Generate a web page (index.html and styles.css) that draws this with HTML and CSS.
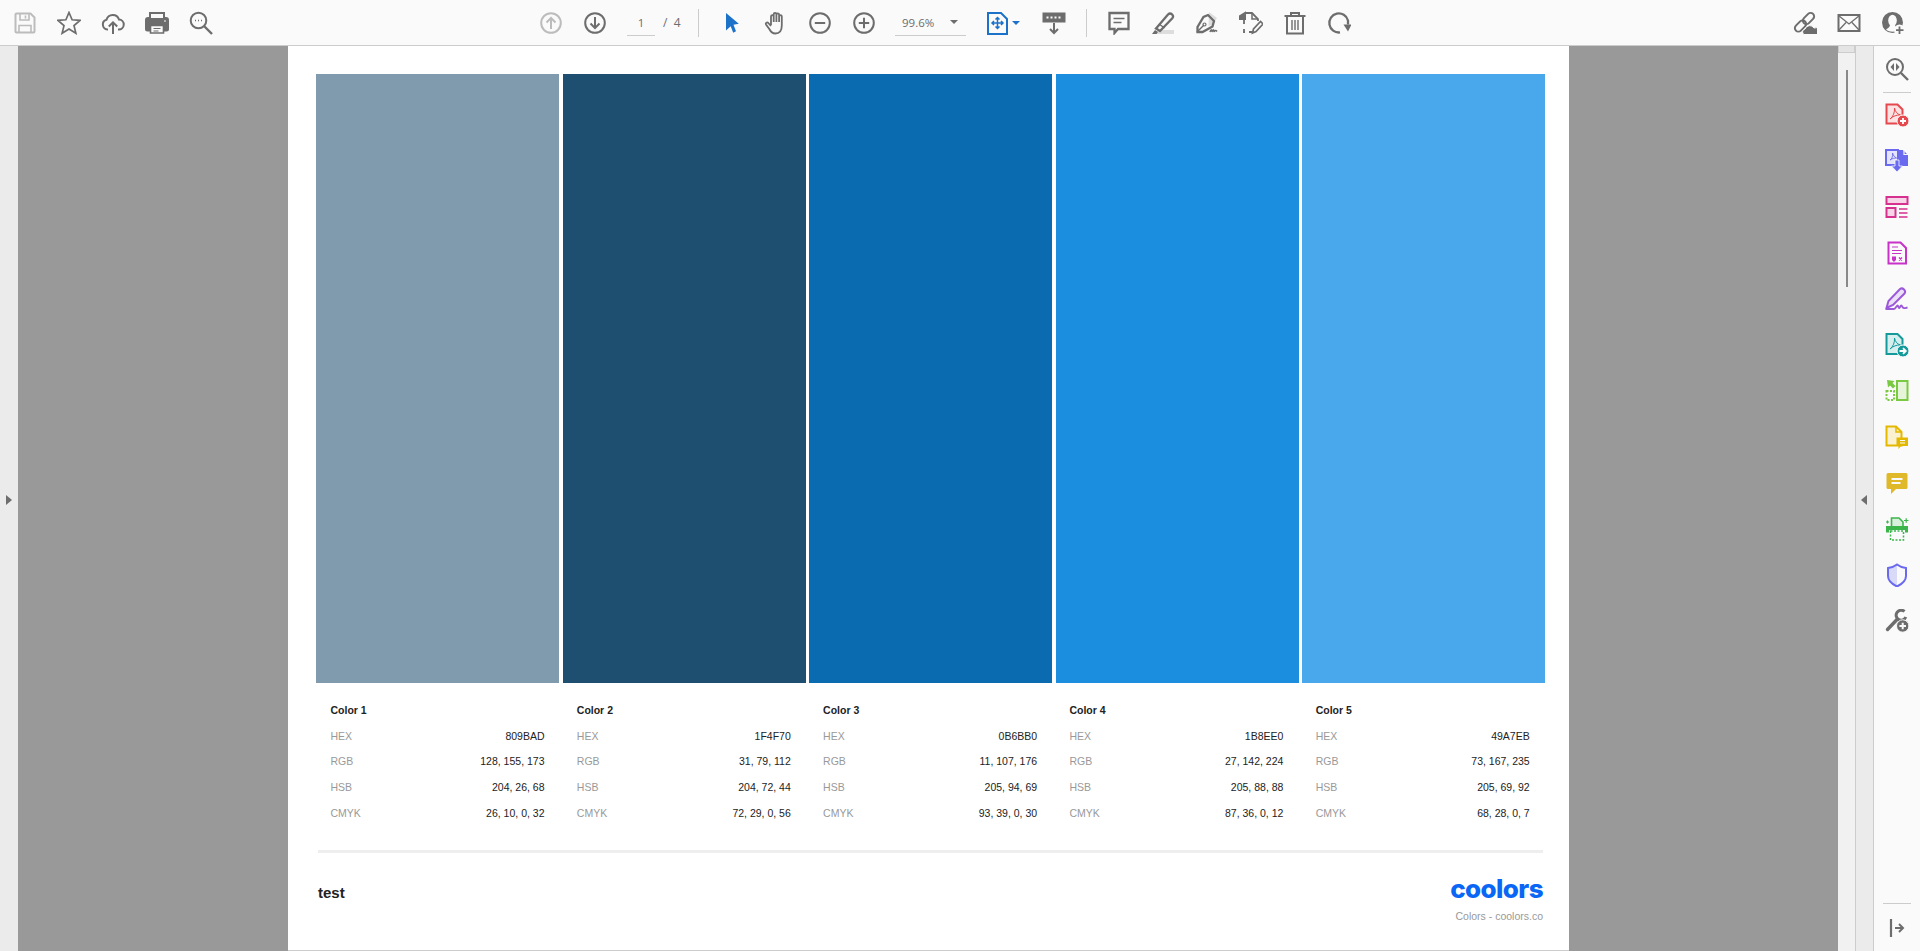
FILE: index.html
```html
<!DOCTYPE html>
<html lang="en">
  <head>
    <meta charset="UTF-8" />
    <title>Coolors palette - PDF viewer</title>
    <link rel="stylesheet" href="styles.css">
  </head>
  <body>
    <header class="toolbar">
      <div class="tool off"><svg viewBox="0 0 24 24"><path d="M2.500 3.500q0-1 1-1h14l4 4v14q0 1-1 1h-17q-1 0-1-1z"/><path d="M7 3v6h9V3M12.500 4.500v3M6 21v-6.500h12V21" stroke-width="1.600"/></svg></div>
      <div class="tool"><svg viewBox="0 0 24 24"><path d="M12 1.500l3.100 7.300 7.900.6-6 5.200 1.900 7.700-6.900-4.200-6.900 4.200 1.900-7.700-6-5.200 7.900-.6z" stroke-width="1.700"/></svg></div>
      <div class="tool"><svg viewBox="0 0 24 24"><path d="M7 18.500H6.500a5 5 0 0 1-1-9.800 6.500 6.500 0 0 1 12.500-.2 5 5 0 0 1-.5 10H17"/><path d="M12 23V11.500M7.800 15.500l4.200-4.200 4.200 4.200"/></svg></div>
      <div class="tool"><svg viewBox="0 0 24 24"><path class="solid" d="M3 7h18q2 0 2 2v9q0 1.500-1.500 1.500H2.500Q1 19.500 1 18V9q0-2 2-2z"/><path d="M5 7V2h14v5" fill="#fafafa"/><path d="M5.500 14.500h13v7.500h-13z" fill="#fafafa" stroke-width="1.600"/><path d="M8.500 17.500h7M8.500 20h5" stroke-width="1.200"/><path d="M19 10h2" stroke="#fafafa" stroke-width="1.200"/></svg></div>
      <div class="tool"><svg viewBox="0 0 24 24"><circle cx="9.500" cy="9.500" r="7.800"/><path d="M15 15l8 8" stroke-width="2.400"/><path d="M6 9.500h1M9 9.500h1M12 9.500h1" stroke-width="1.600"/></svg></div>

      <div class="tool off nav-start"><svg viewBox="0 0 24 24"><circle cx="12" cy="12" r="9.800"/><path d="M12 18V7M7.500 11.500L12 7l4.500 4.500"/></svg></div>
      <div class="tool"><svg viewBox="0 0 24 24"><circle cx="12" cy="12" r="9.800"/><path d="M12 6v11M7.500 12.500L12 17l4.500-4.500"/></svg></div>
      <div class="field page-field">1</div>
      <div class="page-total">/&nbsp;&nbsp;4</div>
      <div class="sep sep-a"></div>
      <div class="tool"><svg viewBox="0 0 24 24"><path class="blue-fill" d="M6 2l12.800 10.700-5.300 1.100 2.500 6.500-2.800 1.400-2.500-6.500L6 19.500z"/></svg></div>
      <div class="tool"><svg viewBox="0 0 24 24"><path d="M7 14V5.500a1.300 1.300 0 0 1 2.700 0V11M9.700 11V3.300a1.300 1.300 0 0 1 2.700 0V11M12.400 11V3.800a1.300 1.300 0 0 1 2.700 0V11M15.100 11V5.500a1.300 1.300 0 0 1 2.700 0v9c0 5-2.500 8-6.500 8-3 0-4.500-1.500-6-4.500L2 13.500c-.8-1.500 1-2.800 2.300-1.500L7 15" stroke-width="1.800"/></svg></div>
      <div class="tool"><svg viewBox="0 0 24 24"><circle cx="12" cy="12" r="9.800"/><path d="M6.800 12h10.400"/></svg></div>
      <div class="tool"><svg viewBox="0 0 24 24"><circle cx="12" cy="12" r="9.800"/><path d="M6.800 12h10.400M12 6.800v10.400"/></svg></div>
      <div class="field zoom-field"><span>99.6%</span><i class="caret"></i></div>
      <div class="fit-tool">
        <svg viewBox="0 0 24 24"><path class="blue-line" d="M2 2h13l6 6v15H2z"/><path class="blue-line" d="M11.500 6.500v11M9.500 8.500l2-2 2 2M9.500 15.500l2 2 2-2M6 12h11M8 10l-2 2 2 2M15 10l2 2-2 2" stroke-width="1.500"/></svg>
        <i class="caret blue"></i>
      </div>
      <div class="tool tool-tts"><svg viewBox="0 0 24 24"><path class="solid" d="M1.500 2.500h21v8h-21z"/><path d="M4.500 6.500h2M8.500 6.500h2M12.500 6.500h2M16.500 6.500h2" stroke="#fafafa" stroke-width="2.200"/><path d="M12 12v10M8 18l4 4 4-4"/></svg></div>
      <div class="sep sep-b"></div>
      <div class="tool"><svg viewBox="0 0 24 24"><path d="M2.500 2h19v16H11l-3.500 4v-4h-5z" stroke-width="2.300"/><path d="M6.500 7.500h11M6.500 11.500h8" stroke-width="1.500"/></svg></div>
      <div class="tool"><svg viewBox="0 0 24 24"><path d="M1 23h22v-4H8z" fill="#ddd" stroke="none"/><path class="solid" d="M1 23l3-4 3 2-1.500 2z" stroke="none"/><path d="M5 17.500L17 3.500q2-2 4-.2t.3 4L9 20z" stroke-width="2.300"/><path d="M8 13l5.500 4" stroke-width="1.500"/></svg></div>
      <div class="tool"><svg viewBox="0 0 24 24"><path d="M14 1l8 6-5 7-4 1 .5 0" fill="#ddd" stroke="none"/><path d="M13 4l6 6-1.500 5.500-10 5.500-5 0 0-5 6-10z" stroke-width="2.300"/><path d="M2 21l7-7" stroke-width="1.500"/><circle cx="9.500" cy="13.500" r="1.500" stroke-width="1.200"/><path d="M15 21c1-3 2-3 2 0 1-3 2-3 2 0 1-2 2-2 3-.5" stroke-width="1.500"/></svg></div>
      <div class="tool"><svg viewBox="0 0 24 24"><path class="solid" d="M1 5l5-3v6H1z"/><path d="M6 2h7l6 6v2M6 21H5v-3M5 13v-4M13 21h-3" stroke-width="1.800"/><path d="M13 2v6h6" stroke-width="1.500"/><path d="M13.500 22l1-4 7-7.500 2.500 2.500-7 7.500z" stroke-width="1.700"/></svg></div>
      <div class="tool"><svg viewBox="0 0 24 24"><path d="M1.500 5h21M8 5V2h8v3M4 5v17.500h16V5"/><path d="M9 9v10M12 9v10M15 9v10" stroke-width="1.400"/></svg></div>
      <div class="tool"><svg viewBox="0 0 24 24"><path d="M13 21.400A9.500 9.500 0 1 1 21 9.500v4" stroke-width="2.300"/><path class="solid" d="M16.500 13.500h8l-3.500 7z" stroke="none"/></svg></div>

      <div class="tool tool-share"><svg viewBox="0 0 24 24"><rect x="1" y="11.500" width="13" height="7" rx="3.500" transform="rotate(-45 7.500 15)"/><rect x="9" y="4" width="13" height="7" rx="3.500" transform="rotate(-45 15.500 7.500)"/><path class="solid" d="M11 23.500a3 3 0 0 1 1-5.500 5 5 0 0 1 9-1 3.500 3.500 0 0 1 3 6.500z" stroke="#fafafa" stroke-width="1"/></svg></div>
      <div class="tool"><svg viewBox="0 0 24 24"><path d="M1.500 4h21v16h-21z"/><path d="M1.500 4.500L12 13 22.500 4.500M1.500 19.500l7.500-8M22.500 19.500l-7.500-8" stroke-width="1.300"/></svg></div>
      <div class="tool"><svg viewBox="0 0 24 24"><circle class="solid" cx="11.500" cy="11.500" r="10.500" stroke="none"/><ellipse cx="11.500" cy="9.500" rx="4.300" ry="5.800" fill="#fafafa" stroke="none"/><path d="M9 14c0 2-2 3-4 4.500 3 3 10 3 13 0-2-1.500-4-2.500-4-4.500z" fill="#fafafa" stroke="none"/><circle cx="18.500" cy="19" r="5.500" fill="#fafafa" stroke="none"/><path d="M18.500 15.500v7.500M15 19.200h7.500" stroke-width="1.800"/></svg></div>
    </header>

    <main class="workspace">
      <aside class="side-left"><i class="arrow-right"></i></aside>

      <div class="viewer">
        <article class="page">
          <div class="swatches">
            <div class="swatch c1"></div>
            <div class="swatch c2"></div>
            <div class="swatch c3"></div>
            <div class="swatch c4"></div>
            <div class="swatch c5"></div>
          </div>

          <div class="details">
            <section>
              <h3>Color 1</h3>
              <div class="row"><span>HEX</span><b>809BAD</b></div>
              <div class="row"><span>RGB</span><b>128, 155, 173</b></div>
              <div class="row"><span>HSB</span><b>204, 26, 68</b></div>
              <div class="row"><span>CMYK</span><b>26, 10, 0, 32</b></div>
            </section>
            <section>
              <h3>Color 2</h3>
              <div class="row"><span>HEX</span><b>1F4F70</b></div>
              <div class="row"><span>RGB</span><b>31, 79, 112</b></div>
              <div class="row"><span>HSB</span><b>204, 72, 44</b></div>
              <div class="row"><span>CMYK</span><b>72, 29, 0, 56</b></div>
            </section>
            <section>
              <h3>Color 3</h3>
              <div class="row"><span>HEX</span><b>0B6BB0</b></div>
              <div class="row"><span>RGB</span><b>11, 107, 176</b></div>
              <div class="row"><span>HSB</span><b>205, 94, 69</b></div>
              <div class="row"><span>CMYK</span><b>93, 39, 0, 30</b></div>
            </section>
            <section>
              <h3>Color 4</h3>
              <div class="row"><span>HEX</span><b>1B8EE0</b></div>
              <div class="row"><span>RGB</span><b>27, 142, 224</b></div>
              <div class="row"><span>HSB</span><b>205, 88, 88</b></div>
              <div class="row"><span>CMYK</span><b>87, 36, 0, 12</b></div>
            </section>
            <section>
              <h3>Color 5</h3>
              <div class="row"><span>HEX</span><b>49A7EB</b></div>
              <div class="row"><span>RGB</span><b>73, 167, 235</b></div>
              <div class="row"><span>HSB</span><b>205, 69, 92</b></div>
              <div class="row"><span>CMYK</span><b>68, 28, 0, 7</b></div>
            </section>
          </div>

          <footer class="page-footer">
            <div class="palette-name">test</div>
            <div class="brand">
              <div class="logo">coolors</div>
              <div class="tagline">Colors - coolors.co</div>
            </div>
          </footer>
        </article>
      </div>

      <div class="scrollbar"><div class="scroll-btn"></div><div class="scroll-thumb"></div></div>
      <aside class="side-right"><i class="arrow-left"></i></aside>

      <nav class="tools">
        <div class="rail-top">
          <div class="rail-tool gray"><svg viewBox="0 0 24 24"><circle cx="10" cy="10" r="8"/><path d="M16 16l7 7" stroke-width="2.400"/><path class="solid" d="M9 6v8L5.500 10zM11 6v8l3.500-4z" stroke="none"/></svg></div>
          <div class="rail-line"></div>
          <div class="rail-tool red"><svg viewBox="0 0 24 24"><path class="tint" d="M1.500 1.500h11l5 5v14h-16z"/><path d="M5 16c3-2 5-7 4.500-11 1 4 2.500 6 6 7-4-.2-7 1-10.500 4z" stroke-width="1"/><circle class="fill" cx="18" cy="18" r="6" stroke="#fafafa" stroke-width="1"/><path d="M18 15v6M15 18h6" stroke="#fff" stroke-width="1.800"/></svg></div>
          <div class="rail-tool indigo"><svg viewBox="0 0 24 24"><path class="tint" d="M1 1h12v15H1z"/><path class="fill" d="M13 1h5l5 5v11H13z" stroke="none"/><path d="M19 .5v5h5" stroke="#fafafa" stroke-width="1.200"/><path d="M5 11c2-1 3-4 2.500-7 1 3 2 4 4 5-2.500 0-4 .5-6.500 2z" stroke-width=".9"/><path class="fill" d="M10 11h4v6h3.500L12 23l-5.500-6H10z" stroke="#fafafa" stroke-width=".8"/></svg></div>
          <div class="rail-tool pink"><svg viewBox="0 0 24 24"><path class="tint" d="M1.500 2h21v7h-21zM1.500 13h9v9h-9z"/><path d="M14 14h8.500M14 18h8.500M14 22h8.500" stroke-width="1.300"/></svg></div>
          <div class="rail-tool magenta"><svg viewBox="0 0 24 24"><path d="M3.500 1.500h12l5.500 5.500v15.500H3.500z"/><path d="M7 6h6M7 9.500h10M7 12.500h9" stroke-width="1.100"/><path class="fill" d="M7 15.500h4v3.500L9 21l-2-2z" stroke="none"/><path d="M14 16.500l3 3M17 16.500l-3 3" stroke-width="1.400"/></svg></div>
          <div class="rail-tool violet"><svg viewBox="0 0 24 24"><path class="tint" d="M1.500 21l2-7L15 2q2-1.500 4 .5t.5 4L8 18z"/><path d="M1 22h8c2 0 3-5 4-3s1 3 2 1 1.500-2 2.500 0 2.500 1 5 .5" stroke-width="1.800"/></svg></div>
          <div class="rail-tool teal"><svg viewBox="0 0 24 24"><path class="tint" d="M1.500 1h11l5 5v15h-16z"/><path d="M5 16c3-2 5-7 4.500-11 1 4 2.500 6 6 7-4-.2-7 1-10.500 4z" stroke-width="1"/><circle class="fill" cx="18" cy="18" r="6" stroke="#fafafa" stroke-width="1"/><path d="M14.500 18h6M18 15.200l2.800 2.800-2.800 2.800" stroke="#fff" stroke-width="1.800"/></svg></div>
          <div class="rail-tool green"><svg viewBox="0 0 24 24"><path class="tint" d="M12 2h10.500v19H12z"/><path d="M1.500 12h7.500v9H1.500z" stroke-dasharray="2 1.500"/><path class="fill" d="M2 1l7.500 1-2 2 3 3-2.500 2.500-3-3-2 2z" stroke="none"/></svg></div>
          <div class="rail-tool yellow"><svg viewBox="0 0 24 24"><path class="tint" d="M1.500 1.500h9.500l5.500 5.500v13.500h-15z"/><path d="M11 1.500V7h5.500" stroke-width="1.500"/><path class="fill" d="M11.500 12.500H23V21h-7l-2.500 3v-3h-2z" stroke="none"/><path d="M15 15.500h5M15 18h5" stroke="#fafafa" stroke-width="1.200"/></svg></div>
          <div class="rail-tool gold"><svg viewBox="0 0 24 24"><path class="fill" d="M3 2h18q1.500 0 1.500 1.500v13q0 1.500-1.500 1.500H11l-5 5v-5H3q-1.500 0-1.500-1.500v-13Q1.500 2 3 2z" stroke="none"/><path d="M6.500 8h11M6.500 12h9" stroke="#fafafa" stroke-width="2"/></svg></div>
          <div class="rail-tool lime"><svg viewBox="0 0 24 24"><path class="tint" d="M6.500 9V1h7.500l4 4v4" stroke-width="1.600"/><path class="fill" d="M1 9h22v6.500h-3V13H4v2.500H1z" stroke="none"/><path d="M5.500 14h13v9h-13z" stroke-dasharray="2 1.500" stroke-width="1.500"/><path d="M19 3.500h4.500M21.200 1.200v4.600M1 5h3M2.500 3.500v3" stroke-width="1.200"/></svg></div>
          <div class="rail-tool indigo"><svg viewBox="0 0 24 24"><path class="half" d="M12 2v20c-5-2-8-4-8-9V5z" stroke="none"/><path d="M12 1.500c2.500 2 5.500 3 9 3.500v8c0 5-4 8-9 10.500-5-2.500-9-5.500-9-10.500V5c3.500-.5 6.500-1.500 9-3.500z"/></svg></div>
          <div class="rail-tool gray"><svg viewBox="0 0 24 24"><path d="M2.500 20.500L12 10.500" stroke-width="3.400" stroke-linecap="round"/><path d="M19.500 2.500A5 5 0 1 0 20.800 8" stroke-width="3"/><circle class="solid" cx="17.700" cy="17" r="6.200" stroke="#fafafa" stroke-width="1"/><path d="M17.700 13.700v6.600M14.400 17h6.600" stroke="#fafafa" stroke-width="2"/></svg></div>
        </div>
        <div class="rail-bottom">
          <div class="rail-line"></div>
          <div class="rail-tool gray"><svg viewBox="0 0 24 24"><path d="M6 3v18" stroke-width="2.200"/><path d="M10 12h8M14 8l4 4-4 4"/></svg></div>
        </div>
      </nav>
    </main>
  </body>
</html>
```

FILE: styles.css
```css
*,
*::before,
*::after {
  box-sizing: border-box;
}

body {
  margin: 0;
  height: 100vh;
  overflow: hidden;
  display: flex;
  flex-direction: column;
  font-family: 'Liberation Sans', Arial, sans-serif;
  background-color: #fafafa;
}

svg {
  display: block;
  width: 24px;
  height: 24px;
  fill: none;
  stroke: #6d6d6d;
  stroke-width: 2;
}

.solid {
  fill: #6d6d6d;
}

/* top toolbar */
.toolbar {
  flex: none;
  height: 46px;
  padding: 0 5px 0 3px;
  display: flex;
  align-items: center;
  background-color: #fafafa;
  border-bottom: 1px solid #ccc;
}
.tool {
  flex: none;
  width: 44px;
  display: flex;
  justify-content: center;
}
.tool.off svg {
  stroke: #bcbcbc;
}
.nav-start {
  margin-left: 306px;
}
.field {
  font-family: 'Open Sans', sans-serif;
  font-size: 11.5px;
  color: #6d6d6d;
  border-bottom: 1px solid #ccc;
  height: 26px;
  line-height: 25px;
}
.page-field {
  width: 28px;
  margin-left: 10px;
  text-align: center;
}
.page-total {
  width: 43px;
  padding-left: 8px;
  font-family: 'Open Sans', sans-serif;
  font-size: 12px;
  color: #6d6d6d;
}
.sep {
  flex: none;
  width: 1px;
  height: 28px;
  background-color: #ccc;
}
.sep-a {
  margin-right: 11px;
}
.sep-b {
  margin: 0 10px;
}
.zoom-field {
  width: 71px;
  margin-left: 9px;
  padding: 0 8px 0 7px;
  display: flex;
  justify-content: space-between;
  align-items: center;
}
.caret {
  width: 0;
  height: 0;
  border-left: 4px solid transparent;
  border-right: 4px solid transparent;
  border-top: 4px solid #6d6d6d;
}
.caret.blue {
  border-top-color: #1c72c9;
}
.fit-tool {
  flex: none;
  width: 42px;
  margin-left: 20px;
  display: flex;
  align-items: center;
  gap: 2px;
}
.blue-fill {
  fill: #1c72c9;
  stroke: none;
}
.blue-line {
  stroke: #1c72c9;
}
.tool-tts {
  margin-left: 4px;
}
.tool-share {
  margin-left: auto;
}

/* viewer area */
.workspace {
  flex: 1;
  min-height: 0;
  display: flex;
}
.side-left {
  flex: none;
  width: 18px;
  display: flex;
  align-items: center;
  background-color: #ebebeb;
}
.arrow-right {
  margin-left: 6px;
  margin-top: 2px;
  border-left: 6px solid #6d6d6d;
  border-top: 5px solid transparent;
  border-bottom: 5px solid transparent;
}
.viewer {
  flex: 1;
  min-width: 0;
  display: flex;
  justify-content: center;
  background-color: #999;
}
.page {
  width: 1281px;
  margin-left: 1px;
  padding: 28px 24px 0 28px;
  background-color: #fff;
  border-bottom: 1px solid #ccc;
}
.swatches {
  height: 609px;
  display: grid;
  grid-template-columns: repeat(5, 243px);
  column-gap: 3.5px;
}
.c1 { background-color: #809bad; }
.c2 { background-color: #1f4f70; }
.c3 { background-color: #0b6bb0; }
.c4 { background-color: #1b8ee0; }
.c5 { background-color: #49a7eb; }

.details {
  margin: 14px 14px 0 14.5px;
  display: grid;
  grid-template-columns: repeat(5, 214px);
  column-gap: 32.3px;
}
.details h3 {
  margin: 0;
  height: 26px;
  line-height: 26px;
  font-size: 10.5px;
  font-weight: bold;
  color: #222;
}
.row {
  height: 25.67px;
  display: flex;
  justify-content: space-between;
  align-items: center;
  font-size: 10.5px;
}
.row span {
  color: #999;
}
.row b {
  font-weight: normal;
  color: #222;
}

.page-footer {
  margin: 24px 2px 0;
  padding-top: 29px;
  display: flex;
  justify-content: space-between;
  border-top: 3px solid #eee;
}
.palette-name {
  margin-top: 2px;
  font-size: 15px;
  font-weight: bold;
  color: #222;
}
.brand {
  text-align: right;
}
.logo {
  margin-top: -9px;
  height: 31px;
  line-height: 31px;
  font-family: Inter, sans-serif;
  font-size: 26px;
  font-weight: 800;
  letter-spacing: -0.6px;
  color: #0a66f5;
}
.tagline {
  margin-top: 6px;
  font-size: 10.5px;
  color: #999;
}

.scrollbar {
  flex: none;
  width: 18px;
  background-color: #f1f1f1;
  border-right: 1px solid #ccc;
}
.scroll-btn {
  height: 7px;
  background-color: #e4e4e4;
  border: 1px solid #ccc;
  border-top: none;
}
.scroll-thumb {
  width: 2px;
  height: 217px;
  margin: 17px 0 0 8px;
  background-color: #888;
}
.side-right {
  flex: none;
  width: 18px;
  display: flex;
  align-items: center;
  background-color: #ebebeb;
  border-right: 1px solid #ccc;
}
.arrow-left {
  margin-left: 5px;
  margin-top: 2px;
  border-right: 6px solid #6d6d6d;
  border-top: 5px solid transparent;
  border-bottom: 5px solid transparent;
}

/* right tool rail */
.tools {
  flex: none;
  width: 46px;
  padding-bottom: 11px;
  display: flex;
  flex-direction: column;
  justify-content: space-between;
  align-items: center;
  background-color: #fafafa;
}
.rail-top,
.rail-bottom {
  display: flex;
  flex-direction: column;
  align-items: center;
}
.rail-top {
  padding-top: 11px;
  gap: 22px;
}
.rail-bottom {
  gap: 12px;
}
.rail-line {
  width: 28px;
  height: 1px;
  background-color: #ccc;
}
.rail-top .rail-line {
  margin: -11px 0 -12px;
}
.rail-tool {
  height: 24px;
}
.gray { --c: #6d6d6d; --t: none; }
.red { --c: #e5484d; --t: #fbe3e3; }
.indigo { --c: #6a6af0; --t: #e4e4fb; }
.pink { --c: #d6318f; --t: #f6d5e8; }
.magenta { --c: #c832c8; --t: #fafafa; }
.violet { --c: #9b59d9; --t: #ece0f8; }
.teal { --c: #159a9c; --t: #d5eeee; }
.green { --c: #7ac943; --t: #e6f5da; }
.yellow { --c: #e5b800; --t: #f9f1cf; }
.gold { --c: #e0b92a; --t: #fafafa; }
.lime { --c: #3cb54a; --t: #d9f0dc; }
.rail-tool svg {
  stroke: var(--c);
}
.rail-tool .fill {
  fill: var(--c);
}
.rail-tool .tint {
  fill: var(--t);
}
.rail-tool .half {
  fill: #d9d9f8;
}
```
